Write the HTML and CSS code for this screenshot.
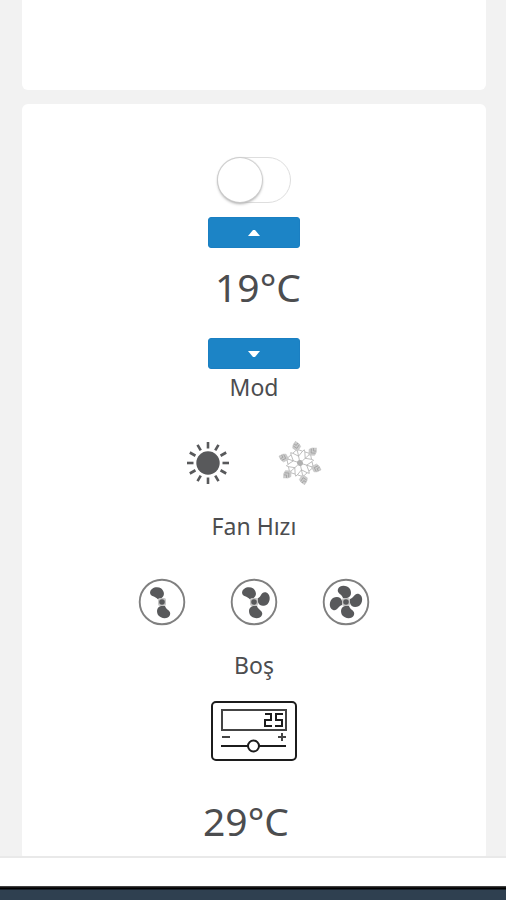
FILE: index.html
```html
<!DOCTYPE html>
<html lang="tr">
<head>
<meta charset="utf-8">
<meta name="viewport" content="width=device-width, initial-scale=1">
<title>Termostat</title>
<link rel="stylesheet" href="styles.css">
</head>
<body>
<svg class="defs" aria-hidden="true">
  <defs>
    <path id="blade" d="M-1 4C-5 5-6 9-4 13C-1 17 6 17.500 8 13C9.500 8.500 4 8 3 4Z"/>
    <g id="hub">
      <circle r="22.3" fill="none" stroke="#808080" stroke-width="1.9"/>
      <rect x="-4" y="-4" width="8" height="8" rx="2" fill="#c4c4c4"/>
      <circle r="2.8"/>
    </g>
    <g id="arm" fill="none" stroke="#aaa" stroke-width="0.7">
      <path d="M0-3V-22M0-7L5-11L7-12M0-7L-5-11L-7-12M-5-11L0-14L5-11"/>
      <path d="M0-22L3-19L4-16L0-12L-4-16L-3-19Z" fill="#ccc" stroke="#c4c4c4"/>
      <path d="M0-15L3-18M0-15L-3-18M0-18L2-20M0-18L-2-20" stroke="#999"/>
    </g>
  </defs>
</svg>
<main class="content">
  <section class="card card-previous"></section>
  <section class="card thermostat">
    <input class="switch" type="checkbox" role="switch" aria-label="Termostat">
    <button class="step" type="button" aria-label="+"><svg width="12" height="6" viewBox="0 0 12 6"><path d="M0 6L5 0H7L12 6Z"/></svg></button>
    <div class="value value-target">19°C</div>
    <button class="step" type="button" aria-label="-"><svg width="12" height="6" viewBox="0 0 12 6"><path d="M0 0H12L7 6H5Z"/></svg></button>
    <h2 class="label">Mod</h2>
    <div class="options">
      <button class="option" type="button" aria-label="Isıtma">
        <svg viewBox="-24 -24 48 48">
          <circle r="11.7"/>
          <g stroke="#58595b" stroke-width="2.6">
            <path id="ray" d="M0-14.500V-21"/>
            <use href="#ray" transform="rotate(30)"/><use href="#ray" transform="rotate(60)"/><use href="#ray" transform="rotate(90)"/><use href="#ray" transform="rotate(120)"/><use href="#ray" transform="rotate(150)"/><use href="#ray" transform="rotate(180)"/><use href="#ray" transform="rotate(210)"/><use href="#ray" transform="rotate(240)"/><use href="#ray" transform="rotate(270)"/><use href="#ray" transform="rotate(300)"/><use href="#ray" transform="rotate(330)"/>
          </g>
        </svg>
      </button>
      <button class="option" type="button" aria-label="Soğutma">
        <svg viewBox="-24 -24 48 48">
          <g transform="rotate(-12)">
            <use href="#arm"/><use href="#arm" transform="rotate(60)"/><use href="#arm" transform="rotate(120)"/><use href="#arm" transform="rotate(180)"/><use href="#arm" transform="rotate(240)"/><use href="#arm" transform="rotate(300)"/>
            <circle r="3" fill="#b0b0b0"/>
          </g>
        </svg>
      </button>
    </div>
    <h2 class="label label-spaced">Fan Hızı</h2>
    <div class="options">
      <button class="option" type="button" aria-label="1">
        <svg viewBox="-24 -24 48 48"><use href="#blade"/><use href="#blade" transform="rotate(160)"/><use href="#hub"/></svg>
      </button>
      <button class="option" type="button" aria-label="2">
        <svg viewBox="-24 -24 48 48"><use href="#blade"/><use href="#blade" transform="rotate(160)"/><use href="#blade" transform="rotate(-98)"/><use href="#hub"/></svg>
      </button>
      <button class="option" type="button" aria-label="3">
        <svg viewBox="-24 -24 48 48"><use href="#blade"/><use href="#blade" transform="rotate(90)"/><use href="#blade" transform="rotate(180)"/><use href="#blade" transform="rotate(-90)"/><use href="#hub"/></svg>
      </button>
    </div>
    <h2 class="label label-spaced">Boş</h2>
    <svg class="device" viewBox="0 0 86 60" fill="none" stroke="#1c1c1c" stroke-width="2">
      <rect x="1" y="1" width="84" height="58" rx="4"/>
      <rect x="11" y="9" width="64" height="20" stroke="#444"/>
      <path d="M54 13H60V19H54V25H61M72 13H65V19H71V25H64"/>
      <path d="M11 36H19M67 36H75M71 32V40" stroke="#444"/>
      <path d="M10 45H37M48 45H75"/>
      <circle cx="42.500" cy="45" r="5.500"/>
    </svg>
    <div class="value value-current">29°C</div>
  </section>
</main>
<footer class="footer"></footer>
</body>
</html>
```
FILE: styles.css
```css
* {
  box-sizing: border-box;
}

body {
  margin: 0;
  height: 100vh;
  display: flex;
  flex-direction: column;
  background: #f2f2f2;
  color: #4c4d4f;
  font-family: "Noto Sans", "Open Sans", sans-serif;
}

.defs {
  position: absolute;
  width: 0;
  height: 0;
}

.content {
  flex: 1;
  min-height: 0;
  overflow: hidden;
  padding: 0 20px 0 22px;
}

.card {
  background: #fff;
  border-radius: 6px;
}

.card-previous {
  height: 90px;
  margin-bottom: 14px;
  border-top-left-radius: 0;
  border-top-right-radius: 0;
}

.thermostat {
  display: flex;
  flex-direction: column;
  align-items: center;
  padding-top: 53px;
}

.switch {
  appearance: none;
  width: 74px;
  height: 46px;
  margin: 0 0 14px;
  border: 1px solid #dedede;
  border-radius: 23px;
  background: #fff;
}

.switch::before {
  content: "";
  display: block;
  width: 44px;
  height: 44px;
  border-radius: 50%;
  background: #fff;
  box-shadow: 0 0 1px 1px #ccc, 0 2px 3px #aaa;
}

.step {
  display: flex;
  align-items: center;
  justify-content: center;
  width: 92px;
  height: 31px;
  padding: 0;
  border: 1px solid #1a7fc2;
  border-radius: 3px;
  background: #1c84c6;
}

.step svg {
  fill: #fff;
}

.value {
  font-size: 39px;
  font-weight: 400;
  line-height: 78px;
}

.value-target {
  padding: 0 0 12px 8px;
}

.value-current {
  margin-top: 21px;
  padding-right: 16px;
}

.label {
  margin: 0;
  font-size: 23px;
  font-weight: 400;
  line-height: 36px;
}

.label-spaced {
  margin-top: 21px;
}

.options {
  display: flex;
  gap: 44px;
  margin-top: 34px;
}

.option {
  width: 48px;
  height: 48px;
  padding: 0;
  border: 0;
  background: none;
}

.option svg {
  display: block;
  fill: #58595b;
}

.device {
  width: 86px;
  height: 60px;
  margin-top: 18px;
}

.footer {
  height: 44px;
  border-top: 2px solid #e9e9e9;
  background: linear-gradient(#fff 28px, #555 28px, #000 30px, #000 31px, #2f4050 32px);
}
```
